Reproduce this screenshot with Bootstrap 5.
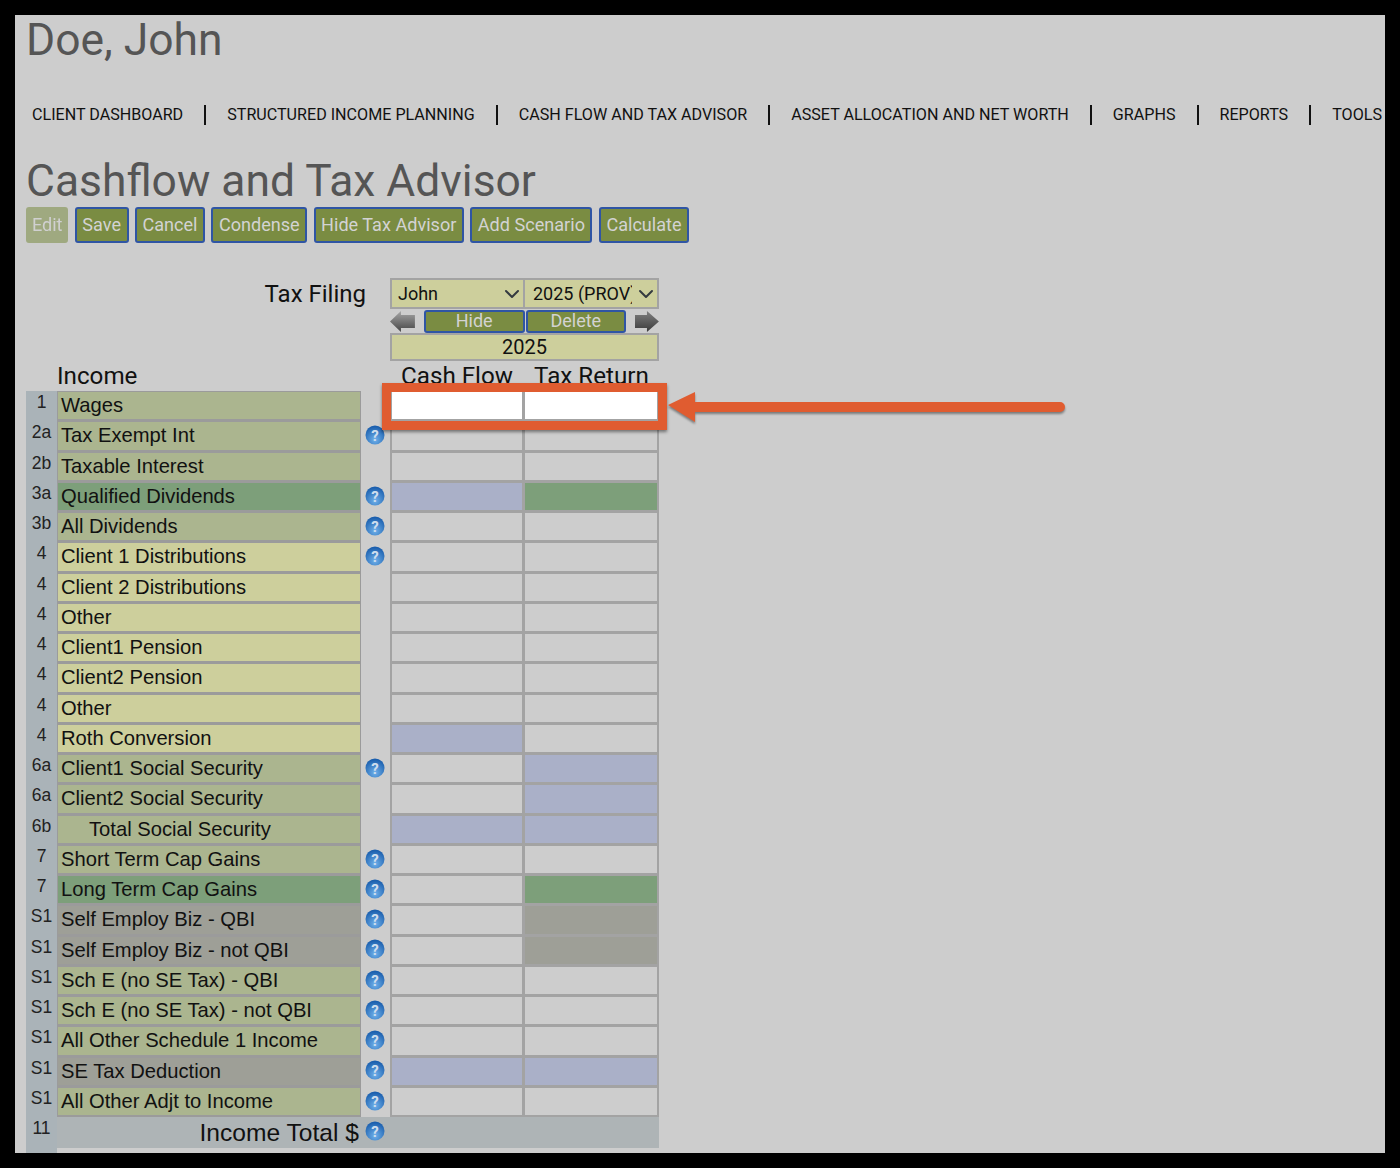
<!DOCTYPE html>
<html lang="en">
<head>
  <meta charset="UTF-8">
  <title>Cashflow and Tax Advisor</title>
  <link href="https://cdn.jsdelivr.net/npm/bootstrap@5.3.3/dist/css/bootstrap.min.css" rel="stylesheet">
  <style>
    body { background: #000; padding: 15px; font-family: Roboto, "Liberation Sans", sans-serif; color: #111; }
    .sheet { width: 1370px; height: 1138px; background: #cdcdcd; overflow: hidden; padding-left: 11px; }
    .page-title { font-family: Roboto, sans-serif; font-size: 44.4px; font-weight: 400; line-height: 50px; color: #555; margin: 0; }
    .client-name { margin-bottom: 33px; }
    .menu-bar { height: 34px; padding-left: 6px; white-space: nowrap; font-size: 16.13px; margin-bottom: 24px; }
    .menu-item { color: #111; text-decoration: none; padding-right: 21px; line-height: 20px; }
    .menu-item + .menu-item { border-left: 2px solid #111; padding-left: 21px; }
    .tool-btn { background: #7a8c42; border: 2px solid #2f55a4; border-radius: 3px; color: #d3d3d3; font-size: 18.1px; line-height: 20px; padding: 6px 5.5px; }
    .tool-btn:hover { background: #7a8c42; border-color: #2f55a4; color: #d3d3d3; }
    .tool-btn:disabled { background: #7a8c42; border-color: #7a8c42; color: #d3d3d3; opacity: .55; padding: 6px 3.9px; }
    .tool-bar { gap: 6.4px; margin-top: 1px; margin-bottom: 35px; }
    .filing-label { width: 340px; height: 31px; text-align: right; font-size: 24px; line-height: 33px; }
    .left-pad { width: 364px; flex: none; }
    .pick { width: 134px; height: 31px; background-color: #cdcf9c; border: 2px solid #a3a3a3; border-right-width: 1px; border-radius: 0; font-size: 18px; line-height: 22px; padding: 2px 25px 2px 6px; color: #111; background-position: right 3px center; background-size: 16px 16px; font-family: Roboto, sans-serif; }
    .pick + .pick { width: 135px; border-left-width: 1px; border-right-width: 2px; padding-left: 8px; }
    .step-row { height: 24px; width: 269px; }
    .step-btn { background: #7a8c42; border: 2px solid #2f55a4; border-radius: 3px; color: #d3d3d3; font-size: 18px; line-height: 18px; padding: 0; height: 23px; width: 101px; }
    .step-btn + .step-btn { margin-left: 1px; }
    .year-box { width: 269px; height: 28px; background: #cdcf9c; border: 2px solid #a3a3a3; text-align: center; font-size: 20px; line-height: 24px; }
    .head-row { height: 30px; font-size: 24.2px; line-height: 30px; color: #111; }
    .income-head { width: 364px; padding-left: 31px; flex: none; }
    .flow-head { width: 134px; text-align: center; }
    .flow-head + .flow-head { padding-left: 1px; }
    .tax-row { height: 30.26px; }
    .line-no { width: 31px; flex: none; background: #aab3b8; text-align: center; font-family: "Liberation Sans", sans-serif; font-size: 17.5px; line-height: 22px; color: #222; }
    .line-label { width: 304px; flex: none; border: solid #9b9b9b; border-width: 1px 1px 2px 1px; font-family: "Liberation Sans", sans-serif; font-size: 20.2px; line-height: 27px; padding-left: 3px; color: #111; white-space: nowrap; }
    .line-help { width: 29px; flex: none; padding-left: 4px; padding-top: 1px; }
    .line-cell { width: 134px; flex: none; border: 2px solid #a3a3a3; border-top-width: 1px; background: #cdcdcd; }
    .line-cell + .line-cell { width: 135px; border-left-width: 1px; }
    .tone-olive { background: #abb58f; }
    .tone-sand { background: #cdcf9c; }
    .tone-green { background: #7d9f7a; }
    .tone-grey { background: #9e9f97; }
    .tone-blue { background: #aab0c8; }
    .tone-white { background: #fff; }
    .indent { padding-left: 31px; }
    .total-row { height: 31px; width: 633px; background: #aeb4b6; }
    .total-label { width: 304px; flex: none; text-align: right; font-family: "Liberation Sans", sans-serif; font-size: 24.6px; line-height: 30px; padding-top: 1px; padding-right: 2px; }
    .tail-bar { width: 31px; height: 6px; background: #aab3b8; }
    .note-box { position: absolute; left: 367px; top: 368px; width: 285px; height: 47px; border: 9px solid #e05c30; box-shadow: 0 2px 3px rgba(0,0,0,.45); }
    .note-arrow { position: absolute; left: 650px; top: 370px; }
  </style>
</head>
<body>

<svg width="0" height="0" class="position-absolute">
  <defs>
    <radialGradient id="helpFill" cx="50%" cy="75%" r="70%">
      <stop offset="0" stop-color="#6fb0ea"/>
      <stop offset="1" stop-color="#1b5fae"/>
    </radialGradient>
    <linearGradient id="stepFill" x1="0" y1="0" x2="0" y2="1">
      <stop offset="0" stop-color="#a6a6a6"/>
      <stop offset="1" stop-color="#454545"/>
    </linearGradient>
    <linearGradient id="stepDark" x1="0" y1="0" x2="0" y2="1">
      <stop offset="0" stop-color="#808080"/>
      <stop offset="1" stop-color="#3a3a3a"/>
    </linearGradient>
    <symbol id="helpIcon" viewBox="0 0 20 20">
      <circle cx="10" cy="10" r="9.5" fill="url(#helpFill)"/>
      <text x="10" y="15.5" text-anchor="middle" font-family="Roboto, sans-serif" font-weight="700" font-size="15" fill="#cfdeee">?</text>
    </symbol>
  </defs>
</svg>

<div class="sheet position-relative">
  <h1 class="page-title client-name">Doe, John</h1>
  <div class="menu-bar d-flex align-items-center" id="menuBar"></div>
  <h1 class="page-title">Cashflow and Tax Advisor</h1>
  <div class="tool-bar d-flex" id="toolBar"></div>

  <div class="d-flex">
    <div class="left-pad"><div class="filing-label">Tax Filing</div></div>
    <select class="form-select pick"><option>John</option></select>
    <select class="form-select pick"><option>2025 (PROV)</option></select>
  </div>
  <div class="d-flex">
    <div class="left-pad"></div>
    <div class="step-row d-flex align-items-center">
      <svg width="26" height="23" viewBox="0 0 26 23"><path d="M0 11.5 11 1v4h14v13H11v4z" fill="url(#stepFill)"/></svg>
      <span style="width:8px"></span>
      <button class="btn step-btn">Hide</button>
      <button class="btn step-btn">Delete</button>
      <span style="width:8px"></span>
      <svg width="25" height="23" viewBox="0 0 25 23"><path d="M25 11.5 13 1v4H1v13h12v4z" fill="url(#stepDark)"/></svg>
    </div>
  </div>
  <div class="d-flex">
    <div class="left-pad"></div>
    <div class="year-box">2025</div>
  </div>
  <div class="head-row d-flex">
    <div class="income-head">Income</div>
    <div class="flow-head">Cash Flow</div>
    <div class="flow-head">Tax Return</div>
  </div>
  <div id="taxRows"></div>
  <div class="total-row d-flex">
    <div class="line-no">11</div>
    <div class="total-label">Income Total $</div>
    <div class="line-help"><svg width="20" height="20"><use href="#helpIcon"/></svg></div>
  </div>
  <div class="tail-bar"></div>

  <div class="note-box"></div>
  <svg class="note-arrow" width="410" height="44" viewBox="0 0 410 44">
    <path d="M3 20 30 7v10h365a5 5 0 0 1 0 10H30v10z" fill="#e05c30" style="filter:drop-shadow(0 2px 1px rgba(0,0,0,.4))"/>
  </svg>
</div>

<script>
  const menu = ["Client Dashboard", "Structured Income Planning", "Cash Flow and Tax Advisor", "Asset Allocation and Net Worth", "Graphs", "Reports", "Tools"];
  const tools = ["Edit", "Save", "Cancel", "Condense", "Hide Tax Advisor", "Add Scenario", "Calculate"];

  // line no, label, label tone, help icon, cash flow tone, tax return tone
  const rows = [
    ["1", "Wages", "olive", 0, "white", "white"],
    ["2a", "Tax Exempt Int", "olive", 1, "", ""],
    ["2b", "Taxable Interest", "olive", 0, "", ""],
    ["3a", "Qualified Dividends", "green", 1, "blue", "green"],
    ["3b", "All Dividends", "olive", 1, "", ""],
    ["4", "Client 1 Distributions", "sand", 1, "", ""],
    ["4", "Client 2 Distributions", "sand", 0, "", ""],
    ["4", "Other", "sand", 0, "", ""],
    ["4", "Client1 Pension", "sand", 0, "", ""],
    ["4", "Client2 Pension", "sand", 0, "", ""],
    ["4", "Other", "sand", 0, "", ""],
    ["4", "Roth Conversion", "sand", 0, "blue", ""],
    ["6a", "Client1 Social Security", "olive", 1, "", "blue"],
    ["6a", "Client2 Social Security", "olive", 0, "", "blue"],
    ["6b", "Total Social Security", "olive indent", 0, "blue", "blue"],
    ["7", "Short Term Cap Gains", "olive", 1, "", ""],
    ["7", "Long Term Cap Gains", "green", 1, "", "green"],
    ["S1", "Self Employ Biz - QBI", "grey", 1, "", "grey"],
    ["S1", "Self Employ Biz - not QBI", "grey", 1, "", "grey"],
    ["S1", "Sch E (no SE Tax) - QBI", "olive", 1, "", ""],
    ["S1", "Sch E (no SE Tax) - not QBI", "olive", 1, "", ""],
    ["S1", "All Other Schedule 1 Income", "olive", 1, "", ""],
    ["S1", "SE Tax Deduction", "grey", 1, "blue", "blue"],
    ["S1", "All Other Adjt to Income", "olive", 1, "", ""]
  ];

  function tone(name) {
    return name ? name.split(" ").map((n, i) => i === 0 ? "tone-" + n : n).join(" ") : "";
  }

  document.getElementById("menuBar").innerHTML = menu
    .map(m => `<a class="menu-item text-uppercase" href="#">${m}</a>`).join("");

  document.getElementById("toolBar").innerHTML = tools
    .map((t, i) => `<button class="btn tool-btn" ${i === 0 ? "disabled" : ""}>${t}</button>`).join("");

  document.getElementById("taxRows").innerHTML = rows.map(r => `
    <div class="tax-row d-flex">
      <div class="line-no">${r[0]}</div>
      <div class="line-label ${tone(r[2])}">${r[1]}</div>
      <div class="line-help">${r[3] ? '<svg width="20" height="20"><use href="#helpIcon"/></svg>' : ""}</div>
      <div class="line-cell ${tone(r[4])}"></div>
      <div class="line-cell ${tone(r[5])}"></div>
    </div>`).join("");
</script>
<script src="https://cdn.jsdelivr.net/npm/bootstrap@5.3.3/dist/js/bootstrap.bundle.min.js"></script>
</body>
</html>
